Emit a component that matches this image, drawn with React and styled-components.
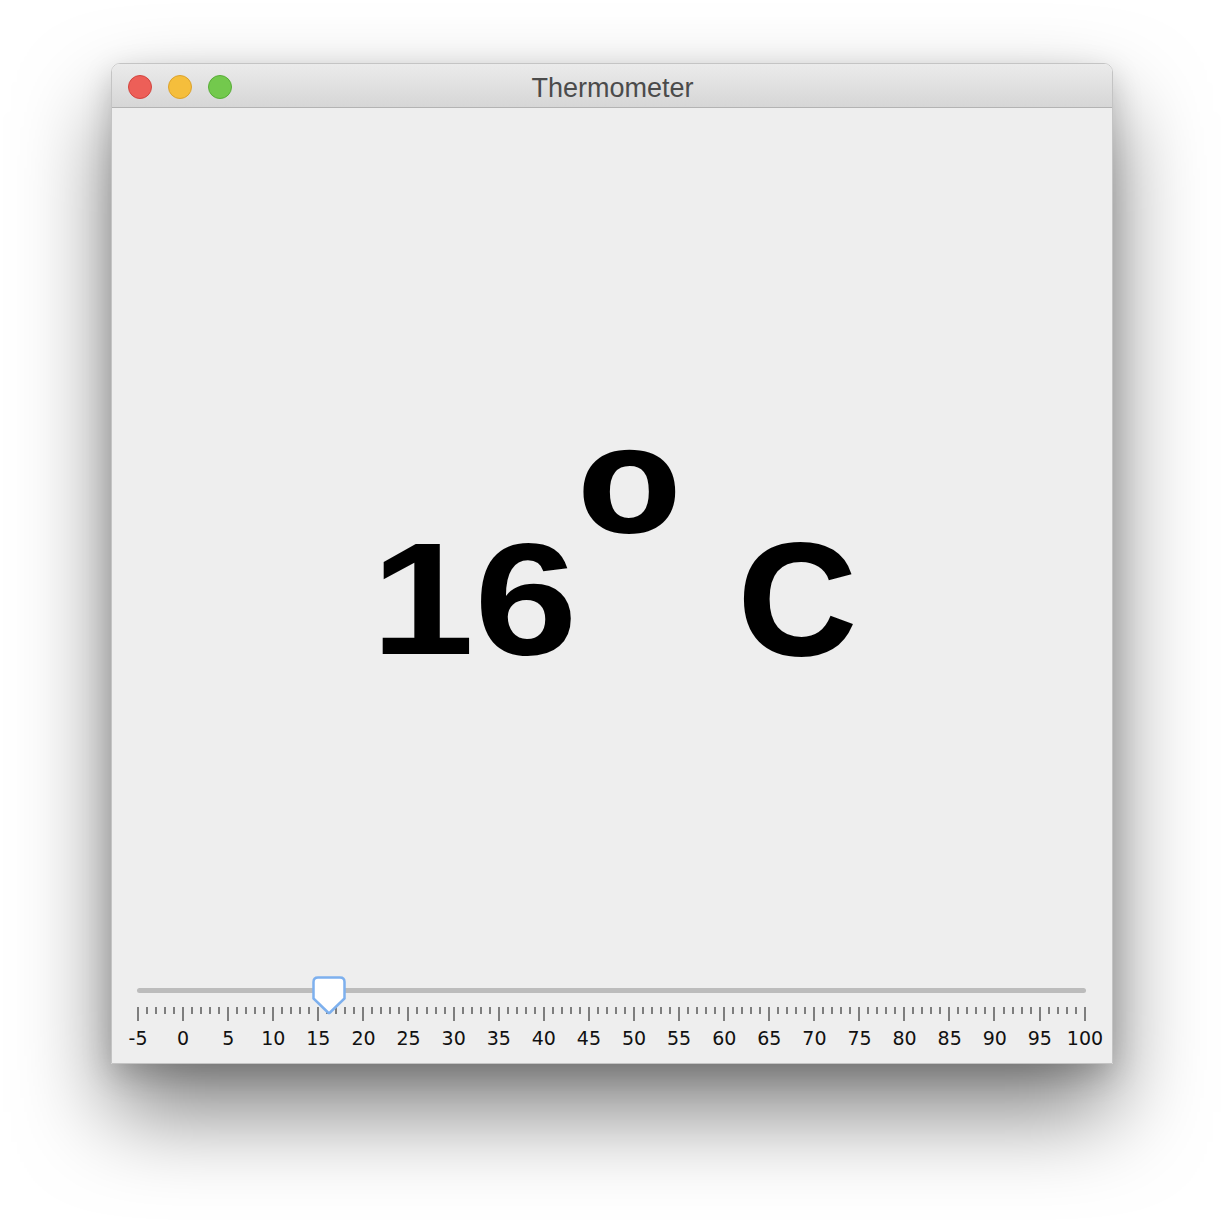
import React from "react";
import styled, { createGlobalStyle } from "styled-components";

const MIN = -5;
const MAX = 100;
const VALUE = 16;

const GlobalStyle = createGlobalStyle`
  html, body {
    margin: 0;
    padding: 0;
    background: #ffffff;
  }
`;

const Stage = styled.div`
  width: 1224px;
  height: 1224px;
  display: flex;
  justify-content: center;
  align-items: flex-start;
  padding-top: 63px;
  box-sizing: border-box;
  overflow: hidden;
`;

const Window = styled.div`
  width: 1002px;
  height: 1001px;
  display: flex;
  flex-direction: column;
  border-radius: 9px 9px 0 0;
  border: 1px solid #c4c4c4;
  box-sizing: border-box;
  overflow: hidden;
  box-shadow: 0 48px 90px rgba(0, 0, 0, 0.5), 0 10px 30px rgba(0, 0, 0, 0.18);
`;

const TitleBar = styled.div`
  height: 44px;
  flex: none;
  display: grid;
  grid-template-columns: 1fr auto 1fr;
  align-items: center;
  background: linear-gradient(#ebebeb, #d6d6d6);
  border-bottom: 1px solid #b3b3b3;
  box-sizing: border-box;
  padding: 3px 15px 0 16px;
`;

const Lights = styled.div`
  display: flex;
  gap: 16px;
`;

const Light = styled.span`
  width: 22px;
  height: 22px;
  border-radius: 50%;
  background: ${(p) => p.$fill};
  border: 1px solid ${(p) => p.$edge};
`;

const Title = styled.div`
  font-family: "Liberation Sans", Arial, sans-serif;
  font-size: 27px;
  color: #4b4b4b;
  padding-top: 2px;
`;

const Content = styled.div`
  flex: 1;
  display: flex;
  flex-direction: column;
  background: #eeeeee;
`;

const Readout = styled.div`
  flex: 1;
  display: flex;
  justify-content: center;
  align-items: flex-end;
  padding-bottom: 291px;
  font-family: "Liberation Sans", Arial, sans-serif;
  font-weight: 700;
  font-size: 160px;
  line-height: 1;
  color: #000;
`;

const Glyph = styled.span`
  display: inline-block;
  font-size: ${(p) => p.$size || 160}px;
  transform: scaleX(${(p) => p.$stretch});
  transform-origin: left bottom;
  margin-right: ${(p) => p.$gap}px;
  margin-bottom: ${(p) => p.$raise || 0}px;
  -webkit-text-stroke: ${(p) => p.$stroke || 0}px #000;
`;

const Slider = styled.div`
  height: 93px;
  flex: none;
  padding: 0 26px 0 25px;
  display: flex;
  flex-direction: column;
`;

const TrackRow = styled.div`
  position: relative;
  height: 30px;
`;

const Track = styled.div`
  position: absolute;
  left: 0;
  right: 0;
  top: 18px;
  height: 5px;
  border-radius: 3px;
  background: #bcbcbc;
`;

const ThumbHolder = styled.div`
  position: absolute;
  top: 5px;
  width: 36px;
  height: 40px;
  margin-left: -18px;
`;

const Ticks = styled.div`
  margin-top: 7px;
  height: 14px;
  display: flex;
  justify-content: space-between;
  align-items: flex-start;
`;

const Tick = styled.span`
  width: 2px;
  height: ${(p) => (p.$major ? 14 : 7)}px;
  background: #7e7e7e;
`;

const Labels = styled.div`
  margin-top: 6px;
  display: flex;
  justify-content: space-between;
  font-family: "DejaVu Sans", Verdana, sans-serif;
  font-size: 19px;
  color: #111;
`;

const Label = styled.span`
  width: 2px;
  display: flex;
  justify-content: center;
  white-space: nowrap;
`;

const ticks = [];
for (let v = MIN; v <= MAX; v++) ticks.push(v);
const labels = ticks.filter((v) => v % 5 === 0);

const ThumbShape = () => (
  <svg viewBox="0 0 36 40" width="36" height="40">
    <path
      d="M7 2.5 H29 Q33.5 2.5 33.5 7 V23.5 L19 37.5 Q18 38.5 17 37.5 L2.5 23.5 V7 Q2.5 2.5 7 2.5 Z"
      fill="#ffffff"
      stroke="#7db0ee"
      strokeWidth="2.5"
    />
  </svg>
);

export default function App() {
  const pct = ((VALUE - MIN) / (MAX - MIN)) * 100;
  return (
    <>
      <GlobalStyle />
      <Stage>
        <Window>
          <TitleBar>
            <Lights>
              <Light $fill="#ed5f58" $edge="#d2453f" />
              <Light $fill="#f5be3c" $edge="#dca22c" />
              <Light $fill="#73c94d" $edge="#58ad38" />
            </Lights>
            <Title>Thermometer</Title>
            <span />
          </TitleBar>
          <Content>
            <Readout>
              <Glyph $stretch={1.16} $gap={29}>16</Glyph>
              <Glyph $size={150} $stretch={1.12} $gap={24} $raise={124} $stroke={2}>o</Glyph>
              <Glyph $stretch={1.02} $gap={0} $stroke={2}>&nbsp;C</Glyph>
            </Readout>
            <Slider>
              <TrackRow>
                <Track />
                <ThumbHolder style={{ left: `calc(${pct}% + 2px)` }}>
                  <ThumbShape />
                </ThumbHolder>
              </TrackRow>
              <Ticks>
                {ticks.map((v) => (
                  <Tick key={v} $major={v % 5 === 0} />
                ))}
              </Ticks>
              <Labels>
                {labels.map((v) => (
                  <Label key={v}>{v}</Label>
                ))}
              </Labels>
            </Slider>
          </Content>
        </Window>
      </Stage>
    </>
  );
}
